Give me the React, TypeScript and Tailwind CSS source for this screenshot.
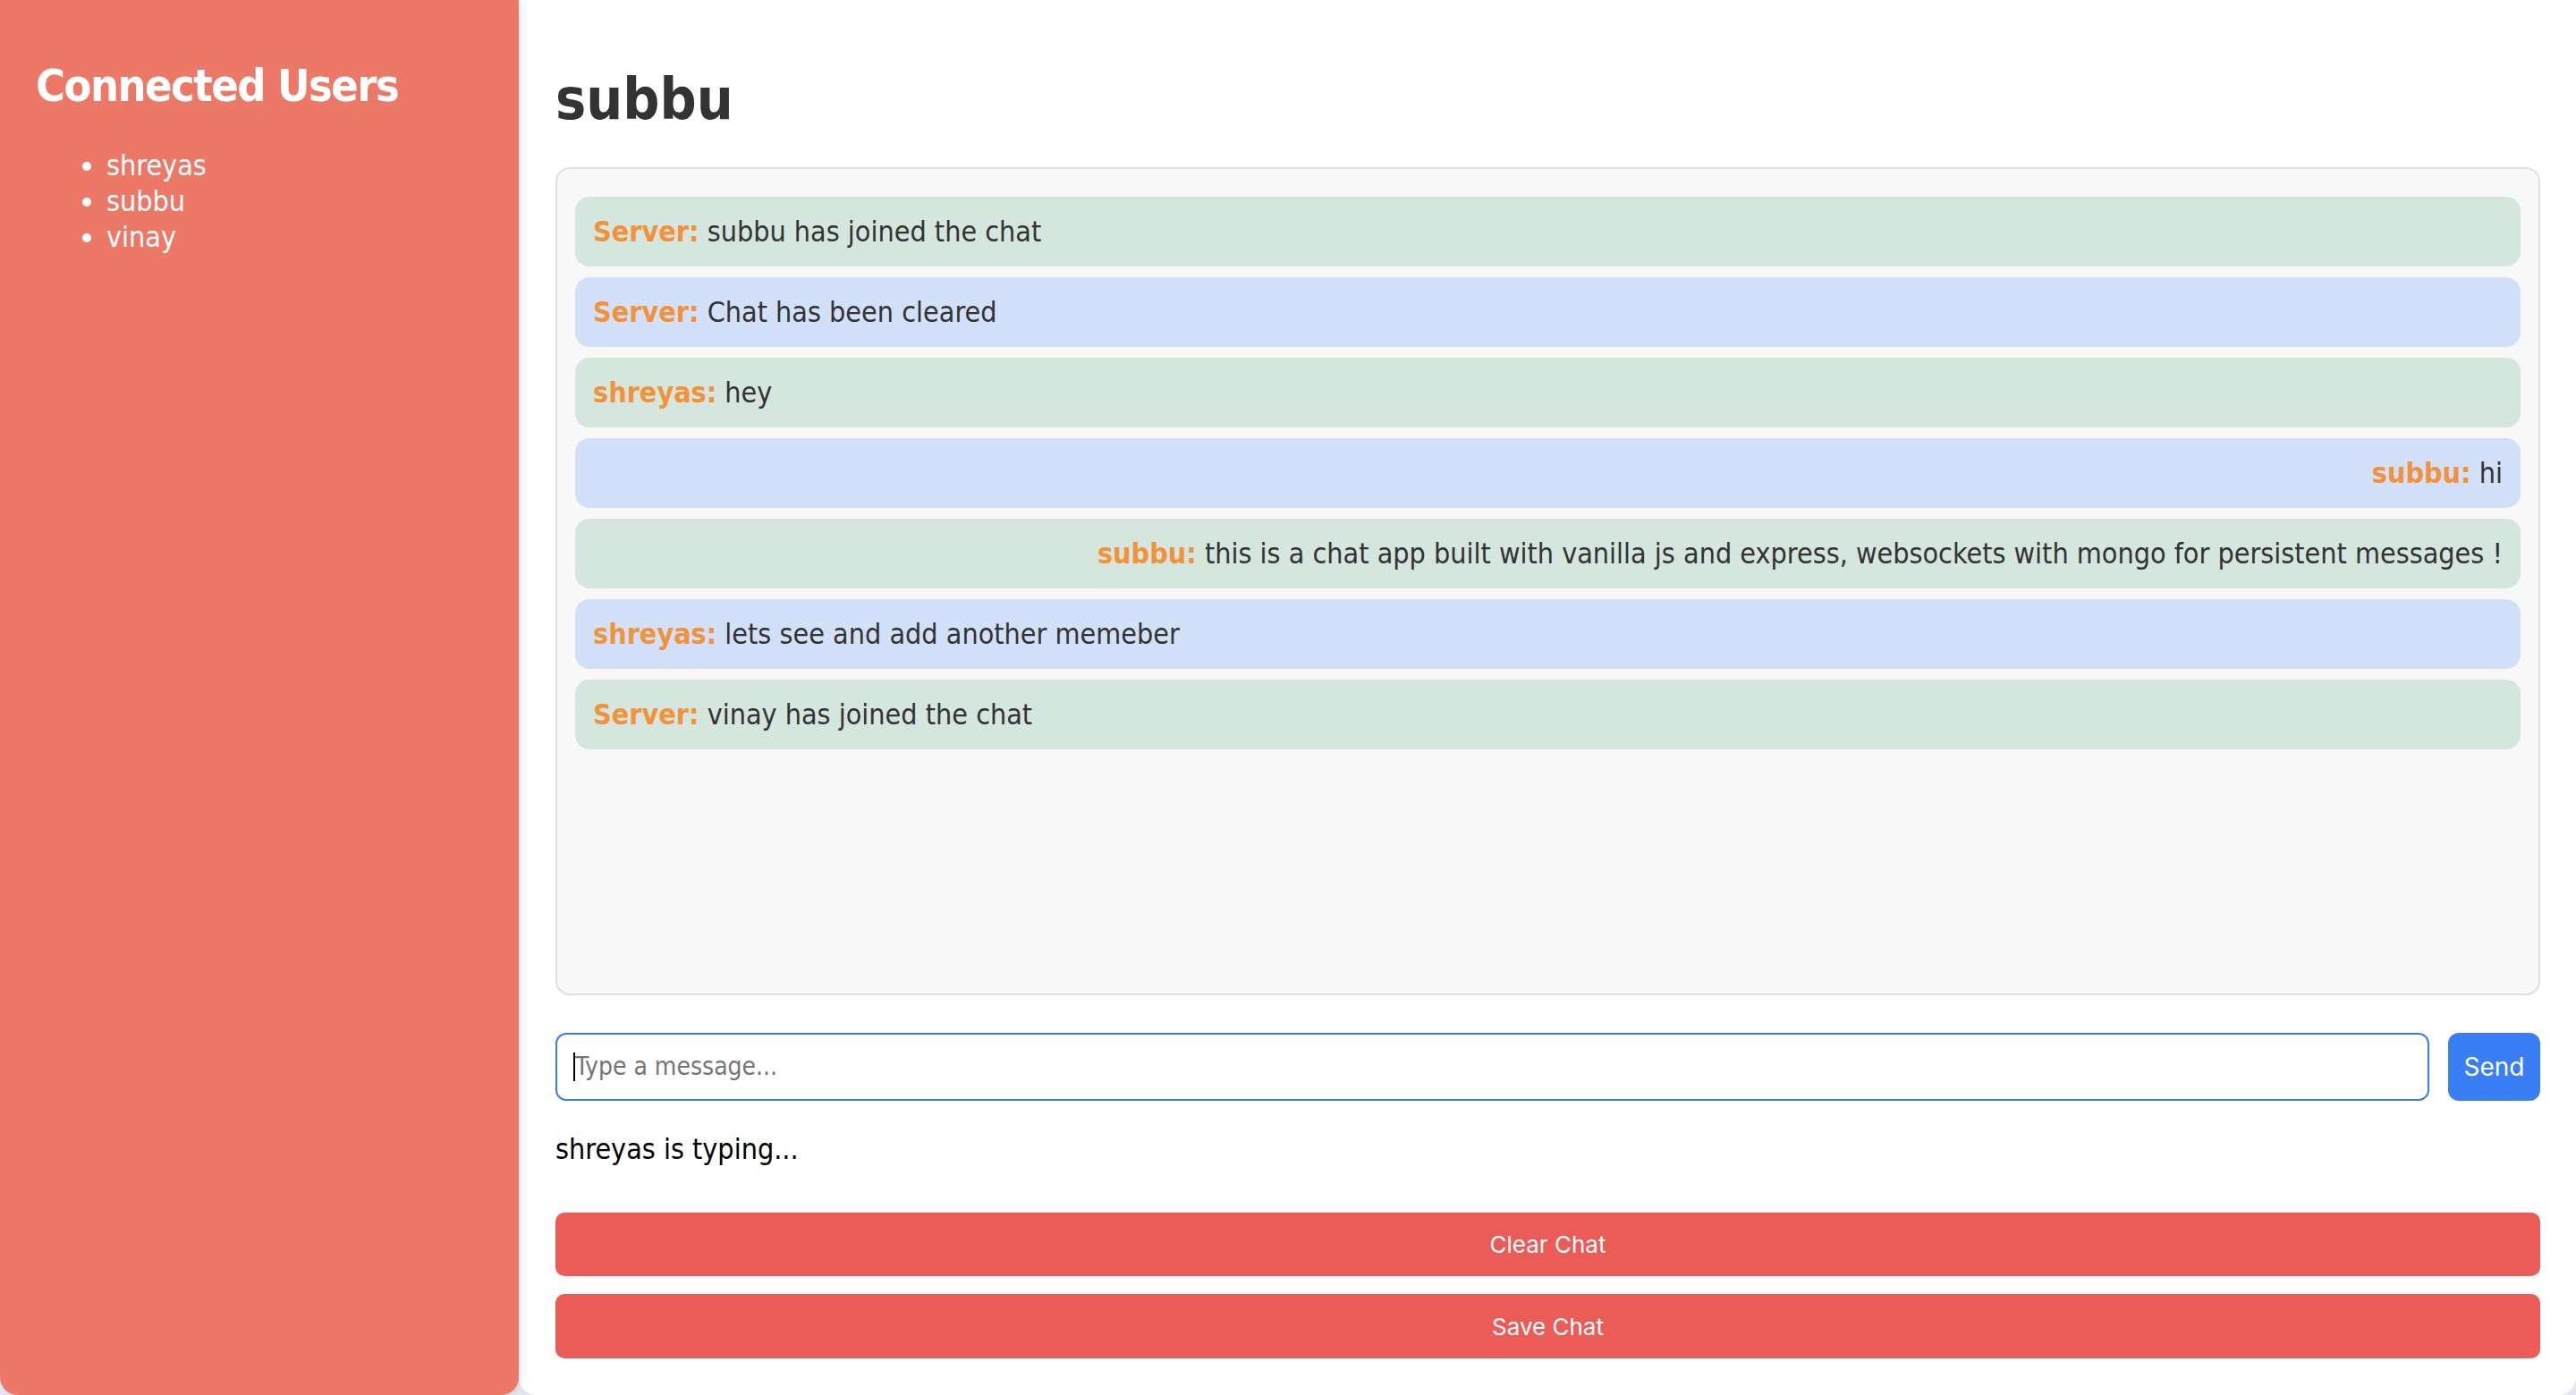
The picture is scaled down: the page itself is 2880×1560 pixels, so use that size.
const tahoma = "font-['DejaVu_Sans_Condensed','DejaVu_Sans',sans-serif]";

type Msg = { from: string; text: string; tone: "green" | "blue"; right?: boolean };

const messages: Msg[] = [
  { from: "Server", text: "subbu has joined the chat", tone: "green" },
  { from: "Server", text: "Chat has been cleared", tone: "blue" },
  { from: "shreyas", text: "hey", tone: "green" },
  { from: "subbu", text: "hi", tone: "blue", right: true },
  {
    from: "subbu",
    text: "this is a chat app built with vanilla js and express, websockets with mongo for persistent messages !",
    tone: "green",
    right: true,
  },
  { from: "shreyas", text: "lets see and add another memeber", tone: "blue" },
  { from: "Server", text: "vinay has joined the chat", tone: "green" },
];

export default function App() {
  return (
    <div className={`flex h-[1560px] w-full bg-[#e4e7ee] ${tahoma}`}>
      {/* sidebar */}
      <aside className="w-[580px] shrink-0 bg-[#ec7867] rounded-b-[20px] shadow-[2px_0_6px_rgba(0,0,0,0.12)] px-[40px] pt-[62px] text-white relative z-10">
        <h2 className="text-[50px] font-bold leading-[68px] tracking-[-1.5px] whitespace-nowrap">Connected Users</h2>
        <ul className="mt-[35px] pl-[79px] list-disc text-[32px] leading-[40px]">
          <li>shreyas</li>
          <li>subbu</li>
          <li>vinay</li>
        </ul>
      </aside>

      {/* main chat */}
      <main className="flex-1 bg-white rounded-b-[20px] pl-[41px] pr-[40px] pt-[71px] flex flex-col">
        <h1 className="text-[64px] font-bold leading-[80px] text-[#333]">subbu</h1>

        <div className="mt-[36px] h-[926px] rounded-[16px] border-2 border-[#e0e0e0] bg-[#f8f8f8] px-[20px] pt-[31px] flex flex-col gap-[12px]">
          {messages.map((m, i) => (
            <div
              key={i}
              className={`h-[78px] shrink-0 rounded-[16px] px-[20px] flex items-center text-[32px] text-[#333] ${
                m.tone === "green" ? "bg-[#d5e6de]" : "bg-[#d3e0fa]"
              } ${m.right ? "justify-end" : "justify-start"}`}
            >
              <span>
                <b className="text-[#f2923a]">{m.from}:</b> {m.text}
              </span>
            </div>
          ))}
        </div>

        <div className="mt-[42px] flex gap-[21px]">
          <div className="flex-1 h-[76px] rounded-[12px] border-2 border-[#3b7cf5] flex items-center pl-[18px]">
            <span className="w-[2px] h-[32px] bg-black" />
            <span className="text-[28px] text-[#757575]">Type a message...</span>
          </div>
          <button className="w-[103px] h-[76px] rounded-[12px] bg-[#3a7ef6] text-white text-[28px] font-['Inter',sans-serif]">
            Send
          </button>
        </div>

        <div className="mt-[34px] text-[32px] leading-[40px] text-black">shreyas is typing...</div>

        <button className="mt-[51px] h-[71px] rounded-[10px] bg-[#eb5b57] text-white text-[26px] font-['Inter',sans-serif]">
          Clear Chat
        </button>
        <button className="mt-[20px] h-[72px] rounded-[10px] bg-[#eb5b57] text-white text-[26px] font-['Inter',sans-serif]">
          Save Chat
        </button>
      </main>
    </div>
  );
}
